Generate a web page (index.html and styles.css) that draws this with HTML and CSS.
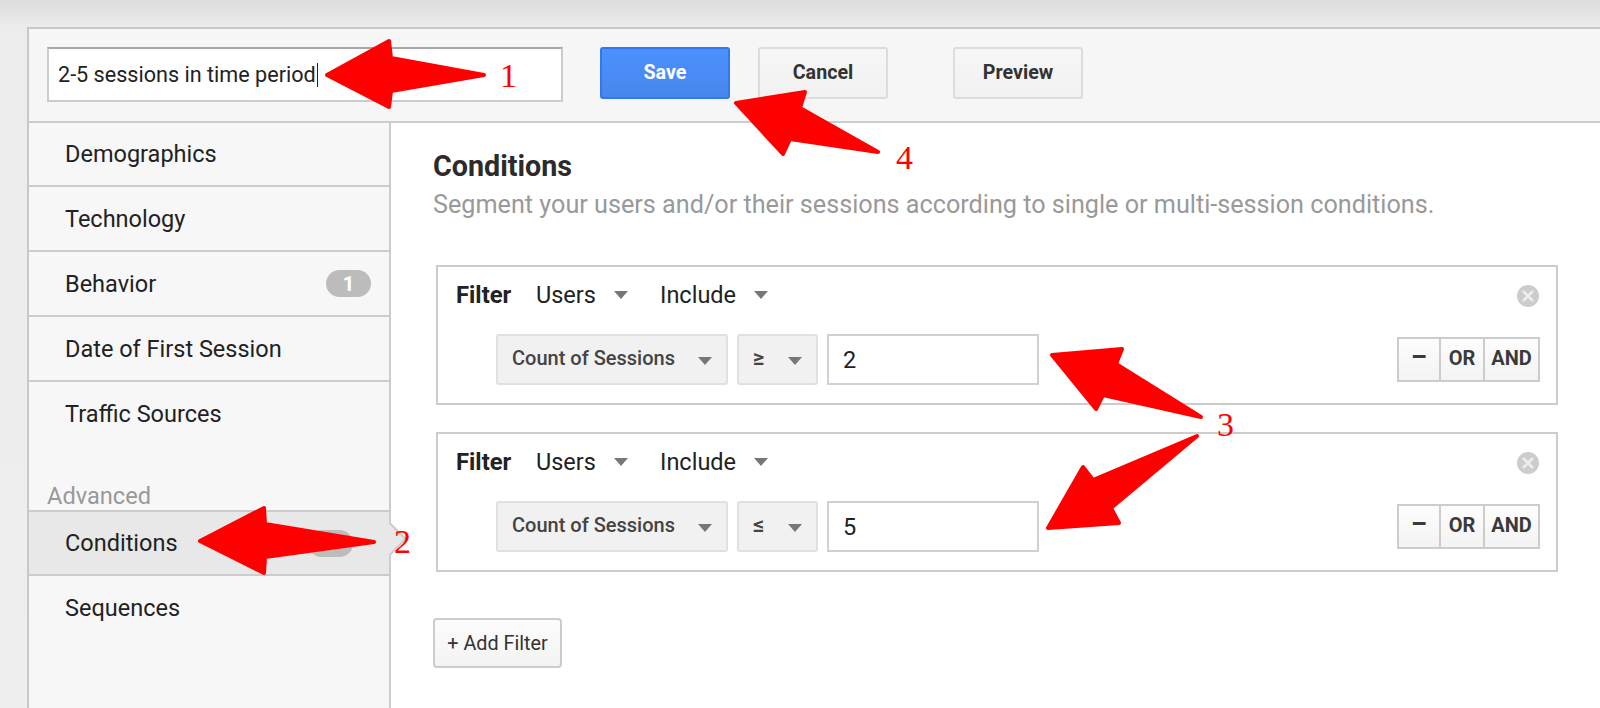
FILE: index.html
```html
<!DOCTYPE html>
<html lang="en">
<head>
<meta charset="utf-8">
<title>Segment conditions</title>
<link rel="stylesheet" href="styles.css">
</head>
<body>
<div class="page">
  <div class="panel">
    <header class="toolbar">
      <div class="name-input"><span>2-5 sessions in time period</span><i class="caret"></i></div>
      <button class="btn btn-primary btn-save">Save</button>
      <button class="btn btn-cancel">Cancel</button>
      <button class="btn btn-preview">Preview</button>
    </header>
    <div class="body">
      <nav class="sidebar">
        <div class="nav-item">Demographics</div>
        <div class="nav-item">Technology</div>
        <div class="nav-item">Behavior<span class="badge">1</span></div>
        <div class="nav-item">Date of First Session</div>
        <div class="nav-item nav-plain">Traffic Sources</div>
        <div class="nav-heading">Advanced</div>
        <div class="nav-item nav-selected">Conditions<span class="badge badge-sel">1</span></div>
        <div class="nav-item nav-plain">Sequences</div>
      </nav>
      <main class="content">
        <h1 class="title">Conditions</h1>
        <p class="subtitle">Segment your users and/or their sessions according to single or multi-session conditions.</p>
        <section class="filter">
          <div class="filter-head">
            <b class="filter-label">Filter</b>
            <span class="drop drop-users">Users<i class="tri"></i></span>
            <span class="drop">Include<i class="tri"></i></span>
            <svg class="remove" viewBox="0 0 22 22" width="22" height="22"><circle cx="11" cy="11" r="11" fill="#ccc"/><path d="M6 6l10 10M16 6l-10 10" stroke="#eee" stroke-width="2.6" fill="none"/></svg>
          </div>
          <div class="filter-row">
            <div class="select select-metric"><span>Count of Sessions</span><i class="tri"></i></div>
            <div class="select select-op"><span>≥</span><i class="tri"></i></div>
            <div class="value">2</div>
            <div class="group"><span class="g-minus">–</span><span class="g-or">OR</span><span class="g-and">AND</span></div>
          </div>
        </section>
        <section class="filter">
          <div class="filter-head">
            <b class="filter-label">Filter</b>
            <span class="drop drop-users">Users<i class="tri"></i></span>
            <span class="drop">Include<i class="tri"></i></span>
            <svg class="remove" viewBox="0 0 22 22" width="22" height="22"><circle cx="11" cy="11" r="11" fill="#ccc"/><path d="M6 6l10 10M16 6l-10 10" stroke="#eee" stroke-width="2.6" fill="none"/></svg>
          </div>
          <div class="filter-row">
            <div class="select select-metric"><span>Count of Sessions</span><i class="tri"></i></div>
            <div class="select select-op"><span>≤</span><i class="tri"></i></div>
            <div class="value">5</div>
            <div class="group"><span class="g-minus">–</span><span class="g-or">OR</span><span class="g-and">AND</span></div>
          </div>
        </section>
        <button class="btn-add">+ Add Filter</button>
      </main>
    </div>
  </div>
  <svg class="arrows" viewBox="0 0 1600 708" width="1600" height="708">
    <g fill="#f00" stroke="#f00" stroke-width="4" stroke-linejoin="round">
      <polygon points="327,75 389,41 391,58 484,75 391,91 389,107"/>
      <polygon points="200,541 264,508 265,524 374,542 265,557 264,573"/>
      <polygon points="736,103 805,92 800,108 878,152 790,139 783,154"/>
      <polygon points="1052,355 1122,349 1116,364 1201,417 1103,395 1096,409"/>
      <polygon points="1197,436 1093,480 1083,467 1048,528 1119,523 1111,508"/>
    </g>
  </svg>
  <span class="mark mark-1">1</span>
  <span class="mark mark-2">2</span>
  <span class="mark mark-3">3</span>
  <span class="mark mark-4">4</span>
</div>
</body>
</html>
```
FILE: styles.css
```css
* { box-sizing: border-box; }
html, body { margin: 0; height: 708px; overflow: hidden; }
body {
  font-family: Roboto, "Liberation Sans", sans-serif;
  color: #222;
  background: linear-gradient(#dcdcdc 0, #ececec 27px, #eee 100%);
}
.page { position: relative; width: 1600px; height: 708px; padding: 27px 0 0 27px; }
.panel {
  width: 1573px;
  height: 681px;
  border-top: 2px solid #c8c8c8;
  border-left: 2px solid #c8c8c8;
  background: #fff;
  display: flex;
  flex-direction: column;
}
.toolbar {
  flex: none;
  height: 94px;
  padding: 18px 0 0 18px;
  background: #f6f6f6;
  border-bottom: 2px solid #ccc;
  display: flex;
  align-items: flex-start;
}
.name-input {
  width: 516px;
  height: 55px;
  background: #fff;
  border: 2px solid #ccc;
  border-top-color: #a8a8a8;
  padding-left: 9px;
  display: flex;
  align-items: center;
  font-size: 21.6px;
  color: #222;
}
.caret { display: block; width: 1px; height: 24px; background: #222; margin-left: 1px; }
.btn {
  width: 130px;
  height: 52px;
  border-radius: 3px;
  border: 2px solid #dcdcdc;
  background: linear-gradient(#f6f6f6, #f1f1f1);
  color: #333;
  font: 700 19.7px Roboto, sans-serif;
  padding: 0 0 2px;
}
.btn-primary {
  color: #fff;
  border-color: #3079ed;
  background: linear-gradient(#4d90fe, #4787ed);
}
.btn-save { margin-left: 37px; }
.btn-cancel { margin-left: 28px; }
.btn-preview { margin-left: 65px; }
.body { flex: 1; display: flex; min-height: 0; }
.sidebar {
  flex: none;
  width: 362px;
  background: #f7f7f7;
  border-right: 2px solid #ccc;
  font-size: 23.5px;
  color: #222;
}
.nav-item {
  position: relative;
  height: 65px;
  padding: 0 18px 0 36px;
  border-bottom: 2px solid #ccc;
  display: flex;
  align-items: center;
  justify-content: space-between;
}
.nav-item:first-child { height: 64px; }
.nav-plain { border-bottom: 0; padding-bottom: 2px; }
.nav-heading {
  height: 64px;
  padding: 0 0 1px 18px;
  display: flex;
  align-items: flex-end;
  color: #999;
  font-size: 23.6px;
}
.nav-selected {
  height: 66px;
  background: #e8e8e8;
  border-top: 2px solid #ccc;
  border-bottom: 2px solid #ccc;
  padding-right: 36px;
  margin-top: -1px;
}
.nav-selected::after {
  content: "";
  position: absolute;
  right: -13px;
  top: 15px;
  width: 22px;
  height: 22px;
  background: #e8e8e8;
  border-top: 2px solid #ccc;
  border-right: 2px solid #ccc;
  transform: rotate(45deg);
}
.badge {
  width: 45px;
  height: 27px;
  border-radius: 14px;
  background: #bcbcbc;
  color: #fff;
  font-size: 21px;
  font-weight: 700;
  display: flex;
  align-items: center;
  justify-content: center;
}
.content { flex: 1; padding: 28px 0 0 42px; min-width: 0; }
.title {
  margin: 0;
  font-size: 28.7px;
  line-height: 30px;
  font-weight: 700;
  color: #2b2b2b;
}
.subtitle {
  margin: 10px 0 0;
  font-size: 25.2px;
  line-height: 28px;
  color: #999;
  white-space: nowrap;
}
.filter {
  width: 1122px;
  height: 140px;
  margin: 0 0 27px 3px;
  border: 2px solid #ccc;
  padding: 16px 14px 0 18px;
}
.subtitle + .filter { margin-top: 46px; }
.filter-head {
  height: 24px;
  display: flex;
  align-items: center;
  font-size: 23.5px;
  color: #222;
}
.filter-label { font-weight: 700; width: 80px; font-size: 23.8px; }
.drop { display: flex; align-items: center; width: 125px; }
.drop-users { width: 124px; }
.tri {
  display: block;
  width: 0;
  height: 0;
  border-left: 7px solid transparent;
  border-right: 7px solid transparent;
  border-top: 8px solid #777;
}
.drop .tri { margin-left: 18px; }
.remove { margin-left: auto; margin-top: 2px; margin-right: 3px; }
.filter-row {
  display: flex;
  align-items: flex-start;
  margin-top: 27px;
  padding-left: 40px;
}
.select {
  height: 51px;
  border: 2px solid #e0e0e0;
  border-radius: 3px;
  background: #f1f1f1;
  display: flex;
  align-items: center;
  justify-content: space-between;
  font-size: 20px;
  font-weight: 500;
  color: #444;
}
.select span { padding-bottom: 4px; }
.select-metric { width: 232px; padding: 0 14px; }
.select-op { width: 81px; margin-left: 9px; padding: 0 14px; font-size: 22px; font-weight: 700; }
.select .tri { margin-top: 3px; }
.value {
  width: 212px;
  height: 51px;
  margin-left: 9px;
  border: 2px solid #d0d0d0;
  background: #fff;
  padding-left: 14px;
  display: flex;
  align-items: center;
  font-size: 23.5px;
  color: #222;
}
.group {
  height: 45px;
  width: 143px;
  margin: 3px 2px 0 auto;
  border: 2px solid #ccc;
  background: linear-gradient(#fdfdfd, #f3f3f3);
  display: flex;
  font-size: 20px;
  font-weight: 700;
  color: #3a3a3a;
}
.group span { display: flex; align-items: center; justify-content: center; padding-bottom: 4px; }
.g-minus { width: 42px; border-right: 2px solid #ccc; font-size: 25px; }
.g-or { width: 44px; border-right: 2px solid #ccc; }
.g-and { flex: 1; }
.btn-add {
  display: block;
  width: 129px;
  height: 50px;
  margin-top: 46px;
  padding: 0;
  border: 2px solid #ccc;
  border-radius: 4px;
  background: linear-gradient(#fcfcfc, #f3f3f3);
  font: 400 19.8px Roboto, sans-serif;
  color: #333;
}
.arrows { position: absolute; left: 0; top: 0; pointer-events: none; }
.mark {
  position: absolute;
  font: 34px/34px "Liberation Serif", serif;
  color: #f00;
}
.mark-1 { left: 500px; top: 59px; }
.mark-2 { left: 394px; top: 525px; }
.mark-3 { left: 1217px; top: 408px; }
.mark-4 { left: 896px; top: 141px; }
```
